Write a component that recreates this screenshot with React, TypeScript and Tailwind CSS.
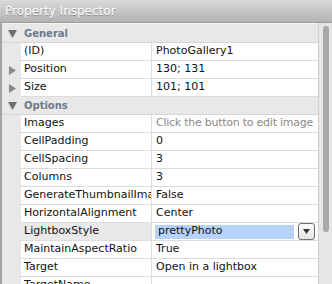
import React from "react";

type Row =
  | { kind: "section"; label: string }
  | { kind: "prop"; label: string; value: string; collapsed?: boolean; muted?: boolean; select?: boolean };

const rows: Row[] = [
  { kind: "section", label: "General" },
  { kind: "prop", label: "(ID)", value: "PhotoGallery1" },
  { kind: "prop", label: "Position", value: "130; 131", collapsed: true },
  { kind: "prop", label: "Size", value: "101; 101", collapsed: true },
  { kind: "section", label: "Options" },
  { kind: "prop", label: "Images", value: "Click the button to edit image", muted: true },
  { kind: "prop", label: "CellPadding", value: "0" },
  { kind: "prop", label: "CellSpacing", value: "3" },
  { kind: "prop", label: "Columns", value: "3" },
  { kind: "prop", label: "GenerateThumbnailImages", value: "False" },
  { kind: "prop", label: "HorizontalAlignment", value: "Center" },
  { kind: "prop", label: "LightboxStyle", value: "prettyPhoto", select: true },
  { kind: "prop", label: "MaintainAspectRatio", value: "True" },
  { kind: "prop", label: "Target", value: "Open in a lightbox" },
  { kind: "prop", label: "TargetName", value: "" },
];

function Down() {
  return (
    <svg width="9" height="8" viewBox="0 0 9 8">
      <polygon points="0,0 9,0 4.5,8" fill="#6f6f6f" />
    </svg>
  );
}

function Right() {
  return (
    <svg width="7" height="9" viewBox="0 0 7 9">
      <polygon points="0,0 7,4.5 0,9" fill="#8a8a8a" />
    </svg>
  );
}

export default function App() {
  return (
    <div
      className="w-[332px] h-[284px] overflow-hidden flex flex-col bg-[#e8e8e8] text-[11px] text-[#111]"
      style={{ fontFamily: '"DejaVu Sans", Verdana, sans-serif' }}
    >
      <div className="h-[23px] shrink-0 flex items-center px-[5px] bg-gradient-to-b from-[#dadada] to-[#b3b3b3] border-b border-[#9e9e9e] text-white text-[12px] [text-shadow:0_1px_0_#8f8f8f] leading-none">
        Property Inspector
      </div>
      <div className="flex flex-1 min-h-0">
        <div className="w-[2px] bg-[#a3a3a3] shrink-0" />
        <div className="flex-1 flex flex-col pt-[1px] border-t border-[#f4f4f4] min-w-0">
          {rows.map((r, i) =>
            r.kind === "section" ? (
              <div key={i} className="h-[18px] shrink-0 flex items-center bg-[#e8e8e8] border-b border-[#d6d6d6]">
                <div className="w-[19px] flex justify-center pl-[2px]">
                  <Down />
                </div>
                <span className="font-bold text-[10px] text-[#6d7a8c] pl-[3px]">{r.label}</span>
              </div>
            ) : (
              <div key={i} className="h-[18px] shrink-0 flex">
                <div className="w-[19px] shrink-0 flex items-center justify-center pl-[2px]">
                  {r.collapsed ? <Right /> : null}
                </div>
                <div
                  className={`w-[131px] shrink-0 flex items-center pl-[3px] border-b border-r border-[#dcdcdc] overflow-hidden whitespace-nowrap ${
                    r.select ? "bg-[#e9e9e9]" : "bg-white"
                  }`}
                >
                  {r.label}
                </div>
                <div className="flex-1 min-w-0 flex items-center bg-white border-b border-[#dcdcdc] overflow-hidden whitespace-nowrap">
                  {r.select ? (
                    <div className="flex items-center w-full pl-[3px] pr-[3px] gap-[4px]">
                      <div className="flex-1 h-[14px] bg-[#b7d3fb] flex items-center pl-[3px]">{r.value}</div>
                      <div className="w-[17px] h-[17px] rounded-[3px] border border-[#6f6f6f] bg-gradient-to-b from-white to-[#e4e4e4] flex items-center justify-center">
                        <svg width="7" height="5" viewBox="0 0 7 5">
                          <polygon points="0,0 7,0 3.5,5" fill="#333" />
                        </svg>
                      </div>
                    </div>
                  ) : (
                    <span className={`pl-[4px] ${r.muted ? "text-[#8a8a8a] tracking-[-0.25px]" : ""}`}>{r.value}</span>
                  )}
                </div>
              </div>
            )
          )}
        </div>
        <div className="w-[14px] shrink-0 bg-[#e6e6e6] border-l border-[#cfcfcf] flex justify-center pt-[3px]">
          <div className="w-[6px] h-[206px] rounded-full bg-[#a9a9a9] ml-[1px]" />
        </div>
      </div>
    </div>
  );
}
